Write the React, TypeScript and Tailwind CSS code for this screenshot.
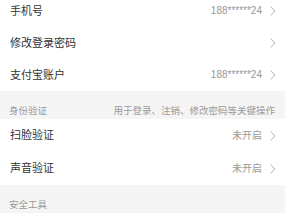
import type { ReactNode } from "react";

const font = { fontFamily: '"Liberation Sans", "Noto Sans CJK SC", sans-serif' };

function Chevron() {
  return (
    <svg width="6" height="10" viewBox="0 0 6 10" className="ml-[8px] shrink-0">
      <path d="M1 1l4 4-4 4" fill="none" stroke="#b5b5b5" strokeWidth="1" strokeLinecap="round" strokeLinejoin="round" />
    </svg>
  );
}

function Row({ label, value }: { label: string; value?: ReactNode }) {
  return (
    <div className="flex h-[32px] items-center justify-between bg-white pl-[10px] pr-[9px]">
      <span className="text-[11px] leading-none text-[#333333]">{label}</span>
      <div className="flex items-center">
        {value && <span className="text-[10px] leading-none text-[#999999]">{value}</span>}
        <Chevron />
      </div>
    </div>
  );
}

function Header({ title, note }: { title: string; note?: string }) {
  return (
    <div className="flex h-[28px] items-end justify-between bg-[#f5f5f5] pb-[4px] pl-[9px] pr-[10px]">
      <span className="text-[9.5px] leading-none text-[#999999]">{title}</span>
      {note && <span className="text-[9.5px] leading-none text-[#999999]">{note}</span>}
    </div>
  );
}

export default function App() {
  return (
    <div className="h-[214px] w-[285px] overflow-hidden bg-white" style={font}>
      <div className="-mt-[5px]">
        <Row label="手机号" value="188******24" />
        <Row label="修改登录密码" />
        <Row label="支付宝账户" value="188******24" />
        <Header title="身份验证" note="用于登录、注销、修改密码等关键操作" />
        <div className="[&>div]:h-[33px]">
          <Row label="扫脸验证" value="未开启" />
          <Row label="声音验证" value="未开启" />
        </div>
        <Header title="安全工具" />
      </div>
    </div>
  );
}
